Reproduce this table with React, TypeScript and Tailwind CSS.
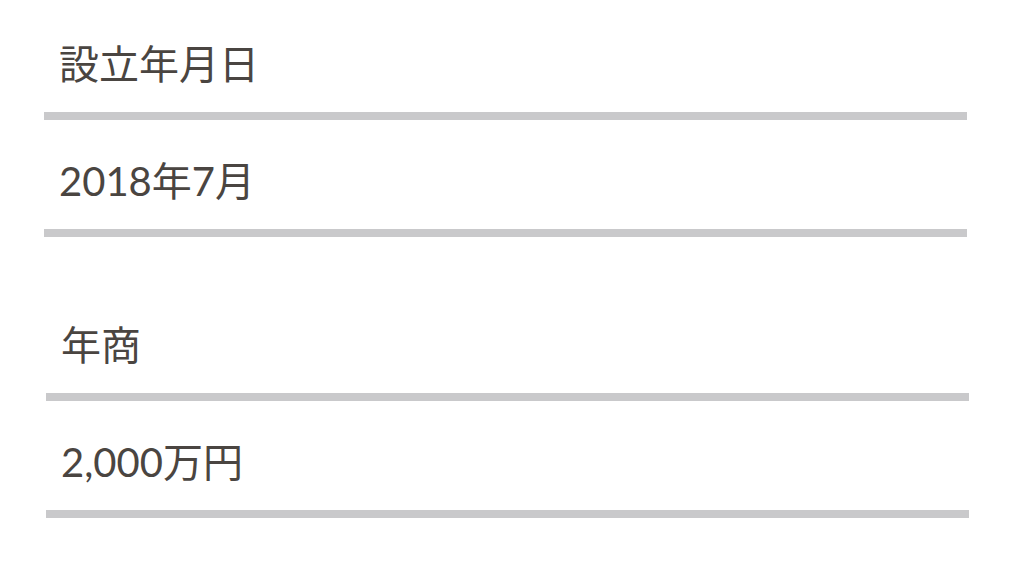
const rows1 = ["設立年月日", "2018年7月"];
const rows2 = ["年商", "2,000万円"];

const Row = ({ text }: { text: string }) => (
  <div className="border-b-8 border-[#c9c9cb] pl-[15px] pt-[31px] pb-[18px]">
    <p className="text-[40px] leading-[60px] text-[#4a4541]">{text}</p>
  </div>
);

export default function App() {
  return (
    <div
      className="h-[577px] w-full overflow-hidden bg-white"
      style={{ fontFamily: "Lato, 'Noto Sans CJK JP', sans-serif" }}
    >
      <div className="ml-[44px] w-[923px] pt-[3px]">
        {rows1.map((t) => (
          <Row key={t} text={t} />
        ))}
      </div>
      <div className="ml-[46px] w-[923px] pt-[47px]">
        {rows2.map((t) => (
          <Row key={t} text={t} />
        ))}
      </div>
    </div>
  );
}
